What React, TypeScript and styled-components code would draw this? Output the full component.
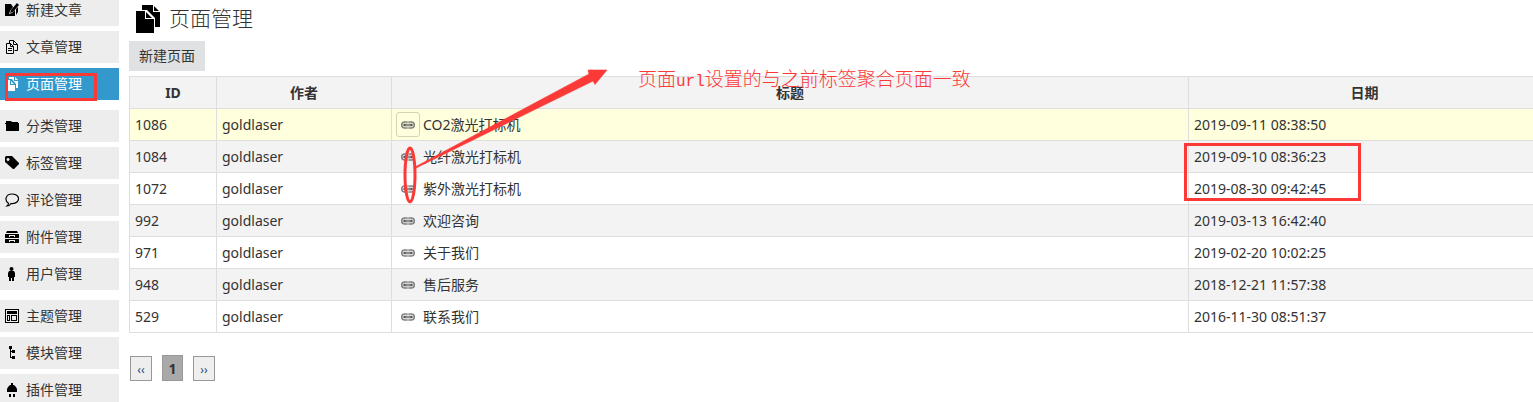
import React from "react";
import styled, { createGlobalStyle } from "styled-components";

const Global = createGlobalStyle`
  * { box-sizing: border-box; }
  body {
    margin: 0;
    overflow: hidden;
    background: #fff;
    color: #333;
    font: 14px/20px "Noto Sans", "Noto Sans CJK SC", sans-serif;
  }
`;

const Page = styled.div`
  position: relative;
  display: flex;
  gap: 10px;
  height: 100vh;
  overflow: hidden;
`;

const Sidebar = styled.nav`
  flex: 0 0 119px;
  display: flex;
  flex-direction: column;
  gap: 10px;
  margin-top: -6px;
`;

const MenuGroup = styled.ul`
  display: flex;
  flex-direction: column;
  gap: 5px;
  margin: 0;
  padding: 0;
  list-style: none;
`;

const MenuLink = styled.a<{ $active?: boolean }>`
  display: flex;
  align-items: center;
  gap: 7px;
  height: 32px;
  padding-left: 5px;
  background: ${(p) => (p.$active ? "#3399cd" : "#ededed")};
  color: ${(p) => (p.$active ? "#fff" : "#333")};
  text-decoration: none;
  svg {
    color: ${(p) => (p.$active ? "#fff" : "#000")};
  }
`;

const Main = styled.main`
  flex: 1;
  min-width: 0;
`;

const Title = styled.h1`
  display: flex;
  align-items: center;
  gap: 9px;
  height: 36px;
  margin: 0 0 5px;
  padding: 2px 0 0 7px;
  font-size: 21px;
  line-height: 28px;
  font-weight: 300;
`;

const TitleText = styled.span`
  padding-bottom: 2px;
`;

const NewButton = styled.button`
  display: block;
  height: 30px;
  padding: 0 10px;
  margin-bottom: 5px;
  border: 0;
  background: #dfe1e3;
  color: #333;
  font: inherit;
`;

const Table = styled.table`
  width: calc(100% + 8px);
  table-layout: fixed;
  border-collapse: collapse;
`;

const Col = styled.col<{ $width?: number }>`
  width: ${(p) => (p.$width ? p.$width + "px" : "auto")};
`;

const Th = styled.th`
  height: 32px;
  padding: 0 5px;
  border: 1px solid #dedede;
  background: #f3f3f3;
  text-align: center;
`;

const Row = styled.tr<{ $tone: string }>`
  background: ${(p) => p.$tone};
`;

const Td = styled.td`
  height: 32px;
  padding: 0 5px;
  border: 1px solid #dedede;
`;

const TitleCell = styled.div`
  display: flex;
  align-items: center;
  gap: 3px;
  margin-left: -1px;
`;

const LinkIcon = styled.a<{ $hover?: boolean }>`
  display: flex;
  align-items: center;
  justify-content: center;
  width: 24px;
  height: 25px;
  border: 1px solid ${(p) => (p.$hover ? "#d5d5b5" : "transparent")};
  border-radius: 3px;
  color: #555;
`;

const Pager = styled.nav`
  display: flex;
  align-items: flex-end;
  gap: 10px;
  margin: 22px 0 0 1px;
`;

const PageLink = styled.a<{ $current?: boolean }>`
  width: ${(p) => (p.$current ? "21px" : "22px")};
  height: ${(p) => (p.$current ? "26px" : "25px")};
  border: 1px solid #999;
  background: ${(p) => (p.$current ? "#a9a9a9" : "#eee")};
  color: ${(p) => (p.$current ? "#333" : "#1d4c7c")};
  font-size: ${(p) => (p.$current ? "14px" : "12px")};
  font-weight: ${(p) => (p.$current ? 700 : 400)};
  line-height: 25px;
  text-align: center;
  text-decoration: none;
`;

const Marks = styled.svg`
  position: absolute;
  top: 0;
  left: 0;
  pointer-events: none;
`;

const Note = styled.p`
  position: absolute;
  top: 65px;
  left: 638px;
  margin: 0;
  color: #fb3a38;
  font: 300 19px/26px "Noto Sans CJK SC", sans-serif;
  white-space: nowrap;
`;

const Mono = styled.span`
  font-family: "Liberation Mono", monospace;
  font-size: 16px;
`;

const art: Record<string, React.ReactNode> = {
  write: (
    <>
      <path d="M0 1h6l2 3-3 4-1 3 3-1 3-3v6H0z" />
      <path d="M12 0l2 2-6 7-3 1 1-3z" />
      <path d="M11 6l2-2v5l-2 3z" />
    </>
  ),
  files: (
    <path
      d="M4.500 3V.5h4l4 4v6H9.500M8.500.5v4h4M1.500 3.500h4l3 3v7h-7zM5.500 3.500v3h3M3 8.500h4M3 10.500h4"
      fill="none"
      stroke="currentColor"
    />
  ),
  pages: (
    <>
      <path d="M1 3h4v5h5v6H1zM6 4l3 3H6z" />
      <path d="M4 0h5v4h4v7h-2V7L7 2H4zM10 0l3 3h-3z" />
    </>
  ),
  folder: <path d="M1 2h5l1 1h6v1h1v8H1V5H0V4h1z" />,
  tag: <path fillRule="evenodd" d="M0 1l1-1h6l7 7v1l-5 5H8L0 6zM3 2a1.500 1.500 0 1 0 .1 0z" />,
  comment: (
    <path
      d="M3.500 10.200C-1 7.500.8 1 7 1s8.200 5 5 8c-1.700 1.600-4 1.700-6 1.500-1 1.600-2.500 2.500-4 2.500 1-.7 1.500-1.300 1.500-2.800z"
      fill="none"
      stroke="currentColor"
      strokeWidth="1.200"
    />
  ),
  drawer: (
    <path
      fillRule="evenodd"
      d="M2 1h10l1 2H1zM0 4h14v4H0zM4 5v2h1V6h4v1h1V5zM0 9h14v4H0zM4 10v2h1v-1h4v1h1v-2z"
    />
  ),
  user: (
    <>
      <circle cx="6.500" cy="2" r="2" />
      <path d="M4 4h5l1 2v4H9v4H7v-3H6v3H4v-4H3V6z" />
    </>
  ),
  theme: (
    <path fillRule="evenodd" d="M0 0h14v14H0zM1 1v12h12V1zM2 2h10v3H2zM2 6h3v6H2zM3 7v4h1V7zM6 6h6v6H6zM7 7v4h4V7z" />
  ),
  tree: <path d="M4 0h3v3H6v2h1V4h3v3H7V6H6v5h1v-1h3v3H7v-1H5V3H4z" />,
  plug: <path d="M6 0h2v2h1l2 2 1 2v3H2V6l1-2 2-2h1zM4 11h2v3H4zM8 11h2v3H8z" />,
};

const Icon = ({ name, size = 14 }: { name: string; size?: number }) => (
  <svg width={size} height={size} viewBox="0 0 14 14" fill="currentColor" aria-hidden="true">
    {art[name]}
  </svg>
);

const PagesIcon = () => (
  <svg width="24" height="28" viewBox="0 0 24 28" aria-hidden="true">
    <path d="M0 6h9v8h9v14H0zM10 7l6 6h-6zM6 0h11v7h7v15h-5v-9L11 5H6zM18 1l5 5h-5z" />
  </svg>
);

const ChainIcon = () => (
  <svg width="14" height="8" viewBox="0 0 14 8" fill="none" stroke="currentColor" aria-hidden="true">
    <rect x=".75" y="1" width="12.500" height="6" rx="3" strokeWidth="1.500" opacity=".75" />
    <path d="M7 0v2.500M7 5.500V8" stroke="#fff" strokeWidth="1" opacity=".6" />
    <path d="M3.500 4h7" strokeWidth="2.500" strokeLinecap="round" />
    <path d="M4.500 4h5" stroke="#ccc" />
  </svg>
);

const menu = [
  [["write", "新建文章"], ["files", "文章管理"], ["pages", "页面管理"]],
  [["folder", "分类管理"], ["tag", "标签管理"], ["comment", "评论管理"], ["drawer", "附件管理"], ["user", "用户管理"]],
  [["theme", "主题管理"], ["tree", "模块管理"], ["plug", "插件管理"]],
];

const rows = [
  ["1086", "CO2激光打标机", "2019-09-11 08:38:50"],
  ["1084", "光纤激光打标机", "2019-09-10 08:36:23"],
  ["1072", "紫外激光打标机", "2019-08-30 09:42:45"],
  ["992", "欢迎咨询", "2019-03-13 16:42:40"],
  ["971", "关于我们", "2019-02-20 10:02:25"],
  ["948", "售后服务", "2018-12-21 11:57:38"],
  ["529", "联系我们", "2016-11-30 08:51:37"],
];

const tone = (i: number) => (i === 0 ? "#ffffdd" : i % 2 ? "#f3f3f3" : "#fff");

export default function App() {
  return (
    <Page>
      <Global />
      <Sidebar>
        {menu.map((group, i) => (
          <MenuGroup key={i}>
            {group.map(([icon, label]) => (
              <li key={label}>
                <MenuLink href="#" $active={icon === "pages"}>
                  <Icon name={icon} />
                  {label}
                </MenuLink>
              </li>
            ))}
          </MenuGroup>
        ))}
      </Sidebar>
      <Main>
        <Title>
          <PagesIcon />
          <TitleText>页面管理</TitleText>
        </Title>
        <NewButton type="button">新建页面</NewButton>
        <Table>
          <colgroup>
            <Col $width={87} />
            <Col $width={175} />
            <Col />
            <Col $width={352} />
          </colgroup>
          <thead>
            <tr>
              <Th>ID</Th>
              <Th>作者</Th>
              <Th>标题</Th>
              <Th>日期</Th>
            </tr>
          </thead>
          <tbody>
            {rows.map(([id, title, date], i) => (
              <Row key={id} $tone={tone(i)}>
                <Td>{id}</Td>
                <Td>goldlaser</Td>
                <Td>
                  <TitleCell>
                    <LinkIcon href="#" aria-label={title} $hover={i === 0}>
                      <ChainIcon />
                    </LinkIcon>
                    {title}
                  </TitleCell>
                </Td>
                <Td>{date}</Td>
              </Row>
            ))}
          </tbody>
        </Table>
        <Pager>
          <PageLink href="#">‹‹</PageLink>
          <PageLink href="#" $current>1</PageLink>
          <PageLink href="#">››</PageLink>
        </Pager>
      </Main>
      <Marks width="1533" height="402" viewBox="0 0 1533 402" fill="none" stroke="#fb3a38" strokeWidth="3" aria-hidden="true">
        <rect x="6.500" y="74.500" width="89" height="25" />
        <rect x="1185.500" y="144.500" width="174" height="55" />
        <ellipse cx="410" cy="175" rx="5" ry="27" />
        <path d="M415 167L589 74l-1-4h19l-12 14.500-2-3.500L416 168z" fill="#fb3a38" stroke="#fb3a38" strokeWidth=".6" />
      </Marks>
      <Note>
        页面<Mono>url</Mono>设置的与之前标签聚合页面一致
      </Note>
    </Page>
  );
}
